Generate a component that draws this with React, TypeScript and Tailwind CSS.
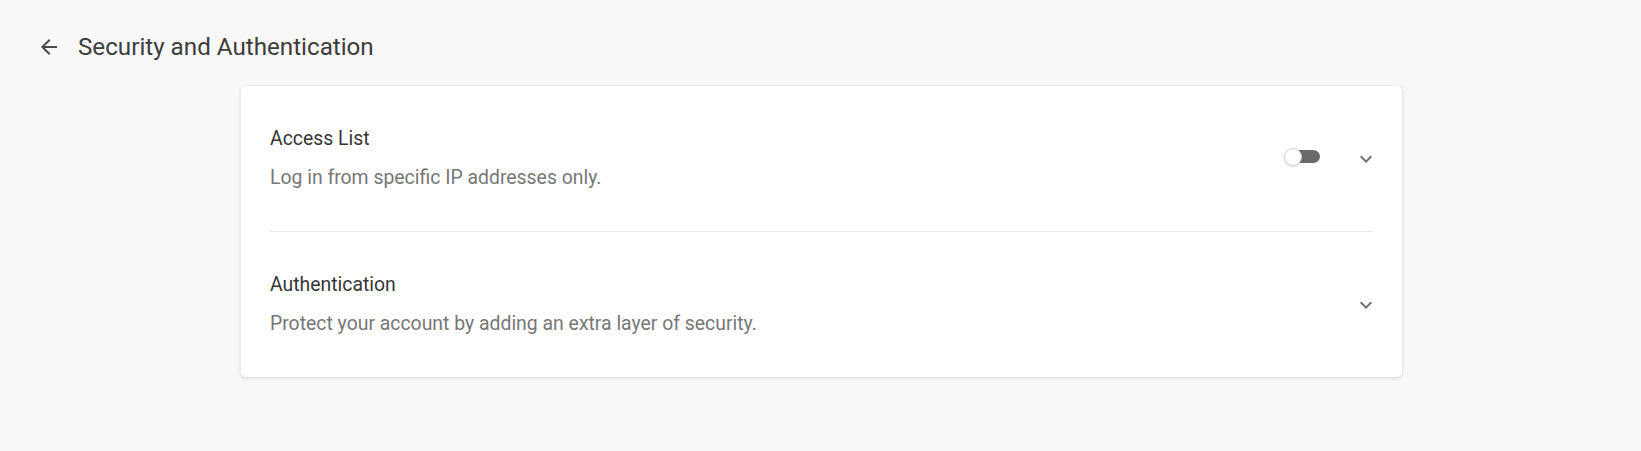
import { useState } from "react";

function BackArrow() {
  return (
    <svg className="w-6 h-6 text-[#4a4a4a]" viewBox="0 0 24 24" fill="currentColor">
      <path d="M20 11H7.83l5.59-5.59L12 4l-8 8 8 8 1.41-1.41L7.83 13H20v-2z" />
    </svg>
  );
}

function Chevron() {
  return (
    <svg className="w-6 h-6 text-[#707070]" viewBox="0 0 24 24" fill="currentColor">
      <path d="M16.59 8.59L12 13.17 7.41 8.59 6 10l6 6 6-6z" />
    </svg>
  );
}

function Toggle({ on, onChange }: { on: boolean; onChange: () => void }) {
  return (
    <button onClick={onChange} className="relative w-[36px] h-[18px] flex items-center">
      <span className="absolute left-[6px] right-0 h-[13px] rounded-full bg-[#6b6b6b]" />
      <span
        className={
          on
            ? "absolute left-[18px] w-[18px] h-[18px] rounded-full bg-white border border-[#d4d4d4] shadow-sm"
            : "absolute left-0 w-[18px] h-[18px] rounded-full bg-white border border-[#d4d4d4] shadow-sm"
        }
      />
    </button>
  );
}

export default function App() {
  const [accessList, setAccessList] = useState(false);

  return (
    <div
      className="min-h-screen bg-[#f8f8f8] pt-[31px]"
      style={{ fontFamily: "Roboto, 'Liberation Sans', sans-serif" }}
    >
      {/* Header */}
      <div className="flex items-center h-8 pl-[37px]">
        <BackArrow />
        <h1 className="ml-[17px] text-[24.2px] leading-8 text-[#3c3c3c]">Security and Authentication</h1>
      </div>

      {/* Card */}
      <div className="mt-[23px] ml-[241px] w-[1161px] bg-white rounded-[5px] shadow-[0_1px_4px_rgba(0,0,0,0.14)]">
        <div className="flex items-center pl-[29px] pr-[24px] py-[39px]">
          <div className="flex-1">
            <p className="text-[19.4px] leading-7 text-[#363636]">Access List</p>
            <p className="mt-[11px] text-[19.4px] leading-7 text-[#777777]">Log in from specific IP addresses only.</p>
          </div>
          <div className="flex items-center">
            <div className="-mt-[4px]">
              <Toggle on={accessList} onChange={() => setAccessList(!accessList)} />
            </div>
            <div className="ml-[34px]">
              <Chevron />
            </div>
          </div>
        </div>

        <div className="mx-[29px] h-px bg-[#e8e8e8]" />

        <div className="flex items-center pl-[29px] pr-[24px] py-[39px]">
          <div className="flex-1">
            <p className="text-[19.4px] leading-7 text-[#363636]">Authentication</p>
            <p className="mt-[11px] text-[19.4px] leading-7 text-[#777777]">
              Protect your account by adding an extra layer of security.
            </p>
          </div>
          <Chevron />
        </div>
      </div>
    </div>
  );
}
